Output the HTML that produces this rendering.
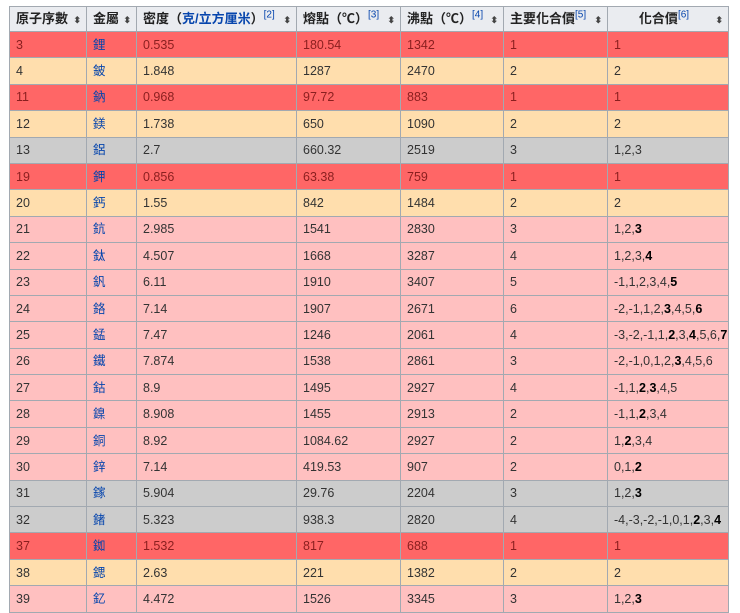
<!DOCTYPE html>
<html><head><meta charset="utf-8"><style>
body{margin:0;background:#fff;width:740px;height:609px;overflow:hidden}
table{position:absolute;left:9px;top:6px;border-collapse:collapse;table-layout:fixed;font-family:"Liberation Sans","Noto Sans CJK TC",sans-serif;font-size:12.5px;color:#333;line-height:14px}
td,th{border:1px solid #a2a9b1;padding:0 0 0 6px;white-space:nowrap;overflow:hidden}
th{background:#eaecf0;font-weight:bold;text-align:left;height:24px;color:#222;font-size:13px;position:relative;padding-right:14px}
th:after{content:"⬍";position:absolute;right:5px;top:6px;font-size:9px;color:#444}
th sup{color:#0645ad;font-weight:normal;font-size:10px;line-height:0}
th a{color:#0645ad}
tbody tr{height:26.4px}
tbody td{height:26.4px;box-sizing:border-box}
td a{color:#0645ad}
.r{background:#ff6666;color:#8a1f1f}
.t{background:#ffdead}
.g{background:#cccccc}
.p{background:#ffc0c0}
b{color:#000}
</style></head><body>
<table>
<colgroup><col style="width:77px"><col style="width:50px"><col style="width:160px"><col style="width:104px"><col style="width:103px"><col style="width:104px"><col style="width:121px"></colgroup>
<thead><tr><th>原子序數</th><th>金屬</th><th>密度（<a>克/立方厘米</a>）<sup>[2]</sup></th><th>熔點（℃）<sup>[3]</sup></th><th>沸點（℃）<sup>[4]</sup></th><th>主要化合價<sup>[5]</sup></th><th style="text-align:center">化合價<sup>[6]</sup></th></tr></thead>
<tbody>
<tr class="r"><td>3</td><td><a>鋰</a></td><td>0.535</td><td>180.54</td><td>1342</td><td>1</td><td>1</td></tr>
<tr class="t"><td>4</td><td><a>鈹</a></td><td>1.848</td><td>1287</td><td>2470</td><td>2</td><td>2</td></tr>
<tr class="r"><td>11</td><td><a>鈉</a></td><td>0.968</td><td>97.72</td><td>883</td><td>1</td><td>1</td></tr>
<tr class="t"><td>12</td><td><a>鎂</a></td><td>1.738</td><td>650</td><td>1090</td><td>2</td><td>2</td></tr>
<tr class="g"><td>13</td><td><a>鋁</a></td><td>2.7</td><td>660.32</td><td>2519</td><td>3</td><td>1,2,3</td></tr>
<tr class="r"><td>19</td><td><a>鉀</a></td><td>0.856</td><td>63.38</td><td>759</td><td>1</td><td>1</td></tr>
<tr class="t"><td>20</td><td><a>鈣</a></td><td>1.55</td><td>842</td><td>1484</td><td>2</td><td>2</td></tr>
<tr class="p"><td>21</td><td><a>鈧</a></td><td>2.985</td><td>1541</td><td>2830</td><td>3</td><td>1,2,<b>3</b></td></tr>
<tr class="p"><td>22</td><td><a>鈦</a></td><td>4.507</td><td>1668</td><td>3287</td><td>4</td><td>1,2,3,<b>4</b></td></tr>
<tr class="p"><td>23</td><td><a>釩</a></td><td>6.11</td><td>1910</td><td>3407</td><td>5</td><td>-1,1,2,3,4,<b>5</b></td></tr>
<tr class="p"><td>24</td><td><a>鉻</a></td><td>7.14</td><td>1907</td><td>2671</td><td>6</td><td>-2,-1,1,2,<b>3</b>,4,5,<b>6</b></td></tr>
<tr class="p"><td>25</td><td><a>錳</a></td><td>7.47</td><td>1246</td><td>2061</td><td>4</td><td>-3,-2,-1,1,<b>2</b>,3,<b>4</b>,5,6,<b>7</b></td></tr>
<tr class="p"><td>26</td><td><a>鐵</a></td><td>7.874</td><td>1538</td><td>2861</td><td>3</td><td>-2,-1,0,1,2,<b>3</b>,4,5,6</td></tr>
<tr class="p"><td>27</td><td><a>鈷</a></td><td>8.9</td><td>1495</td><td>2927</td><td>4</td><td>-1,1,<b>2</b>,<b>3</b>,4,5</td></tr>
<tr class="p"><td>28</td><td><a>鎳</a></td><td>8.908</td><td>1455</td><td>2913</td><td>2</td><td>-1,1,<b>2</b>,3,4</td></tr>
<tr class="p"><td>29</td><td><a>銅</a></td><td>8.92</td><td>1084.62</td><td>2927</td><td>2</td><td>1,<b>2</b>,3,4</td></tr>
<tr class="p"><td>30</td><td><a>鋅</a></td><td>7.14</td><td>419.53</td><td>907</td><td>2</td><td>0,1,<b>2</b></td></tr>
<tr class="g"><td>31</td><td><a>鎵</a></td><td>5.904</td><td>29.76</td><td>2204</td><td>3</td><td>1,2,<b>3</b></td></tr>
<tr class="g"><td>32</td><td><a>鍺</a></td><td>5.323</td><td>938.3</td><td>2820</td><td>4</td><td>-4,-3,-2,-1,0,1,<b>2</b>,3,<b>4</b></td></tr>
<tr class="r"><td>37</td><td><a>銣</a></td><td>1.532</td><td>817</td><td>688</td><td>1</td><td>1</td></tr>
<tr class="t"><td>38</td><td><a>鍶</a></td><td>2.63</td><td>221</td><td>1382</td><td>2</td><td>2</td></tr>
<tr class="p"><td>39</td><td><a>釔</a></td><td>4.472</td><td>1526</td><td>3345</td><td>3</td><td>1,2,<b>3</b></td></tr>
</tbody></table>
</body></html>
